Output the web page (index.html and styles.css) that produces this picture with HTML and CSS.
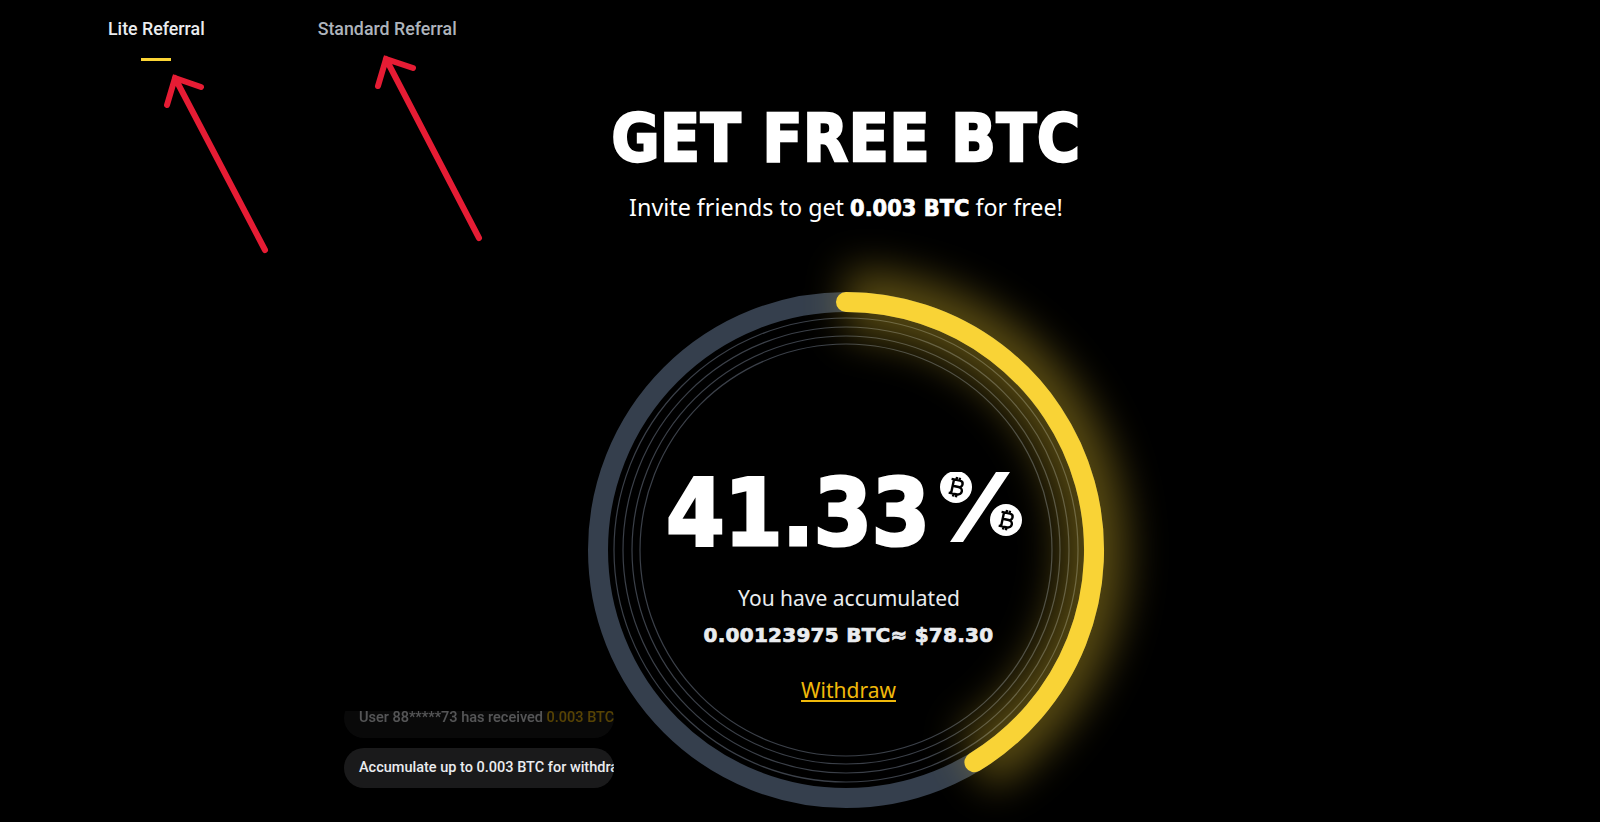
FILE: index.html
```html
<!DOCTYPE html>
<html lang="en">
<head>
<meta charset="utf-8">
<title>Get Free BTC</title>
<link rel="stylesheet" href="styles.css">
</head>
<body>
<nav class="tabs">
  <a class="tab tab-active">Lite Referral</a>
  <a class="tab">Standard Referral</a>
</nav>
<main class="hero">
  <h1 class="title">GET FREE BTC</h1>
  <p class="subtitle">Invite friends to get <b>0.003 BTC</b> for free!</p>
  <section class="stage">
    <svg class="ring" viewBox="-258 -258 516 516" aria-hidden="true">
      <defs>
        <filter id="glow" x="-40%" y="-40%" width="180%" height="180%"><feGaussianBlur stdDeviation="20"/></filter>
      </defs>
      <circle class="ring-line" r="232"/>
      <circle class="ring-line" r="223"/>
      <circle class="ring-line" r="214"/>
      <circle class="ring-line" r="206"/>
      <circle class="ring-track" r="248"/>
      <path class="ring-glow" filter="url(#glow)" d="M0 -248A248 248 0 0 1 128.400 212.200"/>
      <path class="ring-value" d="M0 -248A248 248 0 0 1 128.400 212.200"/>
    </svg>
    <div class="readout">
      <div class="percent">
        <span class="number">41.33</span>
        <svg class="percent-icon" viewBox="0 0 90 70" role="img" aria-label="%">
          <polygon class="slash" points="60,0 74,0 27,70 14,70"/>
          <g transform="translate(20 15)">
            <circle class="coin" r="16"/>
            <path class="coin-b" transform="rotate(12)" d="M-3.500 -8V8M-6 -7H2.500C7 -7 7 -0.500 2.500 -0.500H-3.500M2.500 -0.500C8 -0.500 8 7 2.500 7H-6M-1 -10V-7M2 -10V-7M-1 7V10M2 7V10"/>
          </g>
          <g transform="translate(70 48)">
            <circle class="coin" r="16"/>
            <path class="coin-b" transform="rotate(12)" d="M-3.500 -8V8M-6 -7H2.500C7 -7 7 -0.500 2.500 -0.500H-3.500M2.500 -0.500C8 -0.500 8 7 2.500 7H-6M-1 -10V-7M2 -10V-7M-1 7V10M2 7V10"/>
          </g>
        </svg>
      </div>
      <p class="accumulated">You have accumulated</p>
      <p class="amount">0.00123975 BTC≈ $78.30</p>
      <a class="withdraw">Withdraw</a>
    </div>
    <div class="ticker">
      <div class="pill pill-faded"><span>User 88*****73 has received <em>0.003 BTC</em></span></div>
      <div class="pill"><span>Accumulate up to 0.003 BTC for withdrawal</span></div>
    </div>
  </section>
</main>
<svg class="arrows" viewBox="0 0 1600 822" aria-hidden="true">
  <path d="M265 250L175 78M167 105L175 78L201 87"/>
  <path d="M479 238L386 59M378 86L386 59L413 68"/>
</svg>
</body>
</html>
```

FILE: styles.css
```css
* { box-sizing: border-box; }
html, body { margin: 0; height: 100%; }
body {
  background: #000;
  color: #fff;
  font-family: "Roboto", "Liberation Sans", sans-serif;
  overflow: hidden;
  position: relative;
}
p, h1 { margin: 0; }

.tabs {
  display: flex;
  gap: 113px;
  height: 61px;
  padding-left: 108px;
}
.tab {
  position: relative;
  font-size: 17.8px;
  font-weight: 500;
  line-height: 57px;
  color: #aeb4bc;
}
.tab-active { color: #eaecef; }
.tab-active::after {
  content: "";
  position: absolute;
  left: 50%;
  bottom: 0;
  width: 30px;
  height: 3px;
  margin-left: -15px;
  background: #fcd535;
}

.hero {
  display: flex;
  flex-direction: column;
  align-items: center;
  padding-left: 92px;
}
.title {
  margin-top: 42px;
  font-family: "DejaVu Sans Condensed", "DejaVu Sans", sans-serif;
  font-weight: 700;
  font-size: 65px;
  line-height: 72px;
  letter-spacing: 0.7px;
  -webkit-text-stroke: 2.4px #fff;
}
.subtitle {
  margin-top: 15px;
  font-family: "Noto Sans", sans-serif;
  font-size: 23.3px;
  line-height: 34px;
}
.subtitle b {
  font-family: "DejaVu Sans Condensed", sans-serif;
  font-weight: 700;
  -webkit-text-stroke: .7px #fff;
}

.stage {
  position: relative;
  width: 516px;
  height: 516px;
  margin-top: 67px;
  flex: none;
}
.ring {
  position: absolute;
  left: 0;
  top: 0;
  width: 516px;
  height: 516px;
  overflow: visible;
}
.ring circle, .ring path { fill: none; }
.ring-track { stroke: #353f4d; stroke-width: 20; }
.ring-line { stroke: #3b4049; stroke-width: 1.2; }
.ring-value { stroke: #f9d336; stroke-width: 20; stroke-linecap: round; }
.ring-glow { stroke: #fcd535; stroke-width: 66; opacity: .34; }

.readout {
  position: absolute;
  inset: 0;
  display: flex;
  flex-direction: column;
  align-items: center;
}
.percent {
  position: relative;
  display: flex;
  margin-top: 163px;
  height: 100px;
}
.number {
  font-family: "DejaVu Sans Condensed", "DejaVu Sans", sans-serif;
  font-weight: 700;
  font-size: 93px;
  line-height: 116px;
  letter-spacing: -0.2px;
  -webkit-text-stroke: 3px #fff;
}
.percent-icon {
  width: 90px;
  height: 70px;
  margin-left: 6px;
  margin-top: 17px;
}
.slash { fill: #fff; }
.coin { fill: #fff; }
.coin-b { fill: none; stroke: #000; stroke-width: 2.4; }

.accumulated {
  margin-top: 27px;
  margin-left: 6px;
  font-family: "Noto Sans", sans-serif;
  font-size: 21px;
  line-height: 32px;
  color: #eaecef;
}
.amount {
  margin-top: 6px;
  margin-left: 5px;
  font-family: "DejaVu Sans", sans-serif;
  font-weight: 700;
  font-size: 20px;
  line-height: 30px;
  letter-spacing: .25px;
  color: #eaecef;
  -webkit-text-stroke: .7px #eaecef;
}
.withdraw {
  margin-top: 24px;
  margin-left: 5px;
  font-family: "Noto Sans", sans-serif;
  font-size: 21px;
  line-height: 32px;
  color: #f0b90b;
  text-decoration: underline;
}

.ticker {
  position: absolute;
  left: -244px;
  top: 419px;
  width: 270px;
  height: 77px;
  display: flex;
  flex-direction: column;
  justify-content: flex-end;
  gap: 10px;
  overflow: hidden;
}
.pill {
  flex: none;
  height: 40px;
  border-radius: 20px;
  background: #1a1a1b;
  padding: 0 0 0 15px;
  overflow: hidden;
  white-space: nowrap;
  font-size: 14.5px;
  font-weight: 500;
  line-height: 40px;
  color: #eaecef;
}
.pill-faded { opacity: .36; }
.pill em { font-style: normal; color: #f0b90b; }

.arrows {
  position: absolute;
  left: 0;
  top: 0;
  width: 1600px;
  height: 822px;
  pointer-events: none;
}
.arrows path {
  fill: none;
  stroke: #e61c34;
  stroke-width: 6;
  stroke-linecap: round;
  stroke-linejoin: miter;
}
```
